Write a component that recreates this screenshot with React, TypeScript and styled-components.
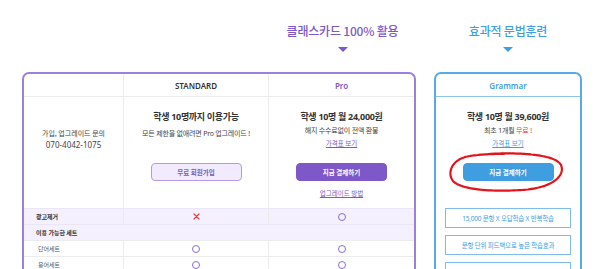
import { FC, Fragment } from 'react';
import styled, { createGlobalStyle } from 'styled-components';

const PURPLE = '#7e57c8';
const PURPLE_LINE = '#9b80df';
const PURPLE_SOFT = '#f4f0fd';
const BLUE = '#3f9ee0';
const BLUE_LINE = '#5aa9e6';
const RED = '#e2404a';
const GRID = '#ececec';

const GlobalStyle = createGlobalStyle`
  html, body {
    margin: 0;
    padding: 0;
    background: #fff;
    overflow: hidden;
  }
  body {
    font-family: "Noto Sans", "Noto Sans CJK KR", sans-serif;
    color: #333;
  }
`;

const Page = styled.div`
  width: 600px;
  height: 269px;
  padding-left: 22px;
  box-sizing: border-box;
  overflow: hidden;
`;

const Headings = styled.div`
  display: flex;
  height: 72px;
`;

const HeadSpacer = styled.div`
  width: 247px;
`;

const Heading = styled.div<{ $color: string; $width: number; $offset?: number }>`
  width: ${(p) => p.$width}px;
  margin-left: ${(p) => p.$offset ?? 0}px;
  display: flex;
  flex-direction: column;
  align-items: center;
  padding-top: 22px;
  color: ${(p) => p.$color};
  font-family: "Noto Sans CJK KR", sans-serif;
  font-size: 12px;
  font-weight: 500;
  line-height: 18px;
  letter-spacing: -0.2px;
`;

const Triangle = styled.span<{ $color: string }>`
  margin-top: 7px;
  width: 0;
  height: 0;
  border-left: 5px solid transparent;
  border-right: 5px solid transparent;
  border-top: 5px solid ${(p) => p.$color};
`;

const Plans = styled.div`
  display: flex;
  align-items: flex-start;
  gap: 18px;
`;

const Table = styled.div`
  width: 394px;
  height: 240px;
  box-sizing: border-box;
  border: 2px solid ${PURPLE_LINE};
  border-bottom: none;
  border-radius: 7px 7px 0 0;
  display: grid;
  grid-template-columns: 100px 145px 145px;
  grid-auto-rows: 16px;
  grid-template-rows: 23px 111px;
  align-content: start;
`;

const HeadCell = styled.div<{ $color?: string; $last?: boolean }>`
  display: flex;
  align-items: center;
  justify-content: center;
  border-bottom: 1px solid ${GRID};
  border-right: ${(p) => (p.$last ? 'none' : `1px solid ${GRID}`)};
  color: ${(p) => p.$color ?? '#333'};
  font-size: 8px;
  font-weight: 600;
`;

const BodyCell = styled.div<{ $last?: boolean; $top?: number }>`
  display: flex;
  flex-direction: column;
  align-items: center;
  padding-top: ${(p) => p.$top ?? 13}px;
  box-sizing: border-box;
  border-right: ${(p) => (p.$last ? 'none' : `1px solid ${GRID}`)};
  text-align: center;
`;

const Contact = styled.div`
  font-family: "Noto Sans CJK KR", sans-serif;
  font-size: 7px;
  line-height: 12px;
  color: #444;
`;

const Phone = styled.div`
  font-size: 8px;
  line-height: 12px;
  color: #444;
`;

const Title = styled.div`
  font-family: "Noto Sans", "Noto Sans CJK KR", sans-serif;
  font-size: 9px;
  font-weight: 700;
  line-height: 14px;
  letter-spacing: -0.3px;
  color: #333;
`;

const Note = styled.div<{ $gap?: number }>`
  margin-top: ${(p) => p.$gap ?? 1}px;
  font-family: "Noto Sans", "Noto Sans CJK KR", sans-serif;
  font-size: 7px;
  line-height: 12px;
  letter-spacing: -0.2px;
  color: #444;
`;

const Free = styled.span`
  color: ${RED};
`;

const LinkText = styled.a<{ $color: string; $gap?: number }>`
  margin-top: ${(p) => p.$gap ?? 0}px;
  font-family: "Noto Sans CJK KR", sans-serif;
  font-size: 6.5px;
  line-height: 12px;
  color: ${(p) => p.$color};
  text-decoration: underline;
`;

const Button = styled.button<{ $variant: 'soft' | 'purple' | 'blue'; $gap: number }>`
  margin-top: ${(p) => p.$gap}px;
  width: 91px;
  height: 18px;
  padding: 0;
  border-radius: 4px;
  font-family: "Noto Sans CJK KR", sans-serif;
  font-size: 6.5px;
  font-weight: 700;
  cursor: pointer;
  border: 1px solid
    ${(p) => (p.$variant === 'soft' ? '#b49ae6' : p.$variant === 'purple' ? PURPLE : BLUE)};
  background: ${(p) => (p.$variant === 'soft' ? '#f1ebfd' : p.$variant === 'purple' ? PURPLE : BLUE)};
  color: ${(p) => (p.$variant === 'soft' ? '#7a5cb5' : '#fff')};
`;

const FeatureCell = styled.div<{ $soft?: boolean; $last?: boolean; $label?: boolean; $bold?: boolean; $span?: boolean }>`
  display: flex;
  align-items: center;
  justify-content: ${(p) => (p.$label ? 'flex-start' : 'center')};
  padding-left: ${(p) => (p.$label ? (p.$bold ? 12 : 14) : 0)}px;
  grid-column: ${(p) => (p.$span ? '1 / -1' : 'auto')};
  background: ${(p) => (p.$soft ? PURPLE_SOFT : '#fff')};
  border-top: 1px solid ${(p) => (p.$soft ? '#ebe5f8' : GRID)};
  border-right: ${(p) => (p.$last || p.$span ? 'none' : `1px solid ${GRID}`)};
  font-family: "Noto Sans CJK KR", sans-serif;
  font-size: 6px;
  font-weight: ${(p) => (p.$bold ? 700 : 400)};
  color: ${(p) => (p.$bold ? '#333' : '#555')};
`;

const Label = styled.span`
  line-height: 8px;
`;

const Circle = styled.span`
  width: 6px;
  height: 6px;
  border: 1.3px solid #8a6bd6;
  border-radius: 50%;
`;

const Card = styled.div`
  position: relative;
  width: 148px;
  height: 240px;
  box-sizing: border-box;
  border: 2px solid ${BLUE_LINE};
  border-bottom: none;
  border-radius: 7px 7px 0 0;
  display: flex;
  flex-direction: column;
`;

const CardHead = styled.div`
  height: 23px;
  display: flex;
  align-items: center;
  justify-content: center;
  border-bottom: 1px solid #8cc6f0;
  color: ${BLUE};
  font-size: 8px;
  font-weight: 600;
  box-sizing: border-box;
`;

const CardBody = styled.div`
  display: flex;
  flex-direction: column;
  align-items: center;
  padding-top: 13px;
`;

const Features = styled.div`
  align-self: stretch;
  margin: 27px 9px 0;
  display: flex;
  flex-direction: column;
  gap: 7px;
`;

const FeatureBox = styled.div`
  height: 20px;
  display: flex;
  align-items: center;
  justify-content: center;
  border: 1px solid #7dbcec;
  box-sizing: border-box;
  color: ${BLUE};
  font-family: "Noto Sans", "Noto Sans CJK KR", sans-serif;
  font-size: 6.5px;
  letter-spacing: -0.2px;
`;

const Scribble = styled.svg`
  position: absolute;
  left: 12px;
  top: 78px;
  pointer-events: none;
`;

const Cross: FC = () => (
  <svg width="7" height="7" viewBox="0 0 7 7">
    <path d="M1 1L6 6M6 1L1 6" stroke={RED} strokeWidth="1.2" strokeLinecap="round" />
  </svg>
);

const rows = [
  { label: '단어세트', standard: true, pro: true },
  { label: '용어세트', standard: true, pro: true },
];

export default function App() {
  return (
    <>
      <GlobalStyle />
      <Page>
        <Headings>
          <HeadSpacer />
          <Heading $color={PURPLE} $width={147}>
            클래스카드 100% 활용
            <Triangle $color={PURPLE} />
          </Heading>
          <Heading $color={BLUE} $width={148} $offset={18}>
            효과적 문법훈련
            <Triangle $color={BLUE} />
          </Heading>
        </Headings>

        <Plans>
          <Table>
            <HeadCell />
            <HeadCell>STANDARD</HeadCell>
            <HeadCell $color={PURPLE} $last>
              Pro
            </HeadCell>

            <BodyCell $top={30}>
              <Contact>가입, 업그레이드 문의</Contact>
              <Phone>070-4042-1075</Phone>
            </BodyCell>
            <BodyCell>
              <Title>학생 10명까지 이용가능</Title>
              <Note $gap={4}>모든 제한을 없애려면 Pro 업그레이드 !</Note>
              <Button $variant="soft" $gap={23}>
                무료 회원가입
              </Button>
            </BodyCell>
            <BodyCell $last>
              <Title>학생 10명 월 24,000원</Title>
              <Note>해지 수수료없이 전액 환불</Note>
              <LinkText $color={PURPLE}>가격표 보기</LinkText>
              <Button $variant="purple" $gap={14}>
                지금 결제하기
              </Button>
              <LinkText $color={PURPLE} $gap={6}>
                업그레이드 방법
              </LinkText>
            </BodyCell>

            <FeatureCell $soft $label $bold>
              광고제거
            </FeatureCell>
            <FeatureCell $soft>
              <Cross />
            </FeatureCell>
            <FeatureCell $soft $last>
              <Circle />
            </FeatureCell>

            <FeatureCell $soft $label $bold $span>
              이용 가능한 세트
            </FeatureCell>

            {rows.map((r) => (
              <Fragment key={r.label}>
                <FeatureCell $label>
                  <Label>{r.label}</Label>
                </FeatureCell>
                <FeatureCell>{r.standard && <Circle />}</FeatureCell>
                <FeatureCell $last>{r.pro && <Circle />}</FeatureCell>
              </Fragment>
            ))}
          </Table>

          <Card>
            <CardHead>Grammar</CardHead>
            <CardBody>
              <Title>학생 10명 월 39,600원</Title>
              <Note>
                최초 1개월 <Free>무료 !</Free>
              </Note>
              <LinkText $color={BLUE}>가격표 보기</LinkText>
              <Button $variant="blue" $gap={14}>
                지금 결제하기
              </Button>
              <Features>
                <FeatureBox>15,000 문항 X 오답학습 X 반복학습</FeatureBox>
                <FeatureBox>문항 단위 피드백으로 높은 학습효과</FeatureBox>
                <FeatureBox />
              </Features>
            </CardBody>
            <Scribble width="120" height="42" viewBox="0 0 120 42">
              <path
                d="M40 2C75 0 108 3 113 13C117 22 108 34 80 37.5C52 40 14 39 5 29C-1 21 3 7 22 4C32 2.5 44 1.8 56 2"
                fill="none"
                stroke="#e3141b"
                strokeWidth="2.2"
                strokeLinecap="round"
                strokeDasharray="3 0.6"
              />
            </Scribble>
          </Card>
        </Plans>
      </Page>
    </>
  );
}
